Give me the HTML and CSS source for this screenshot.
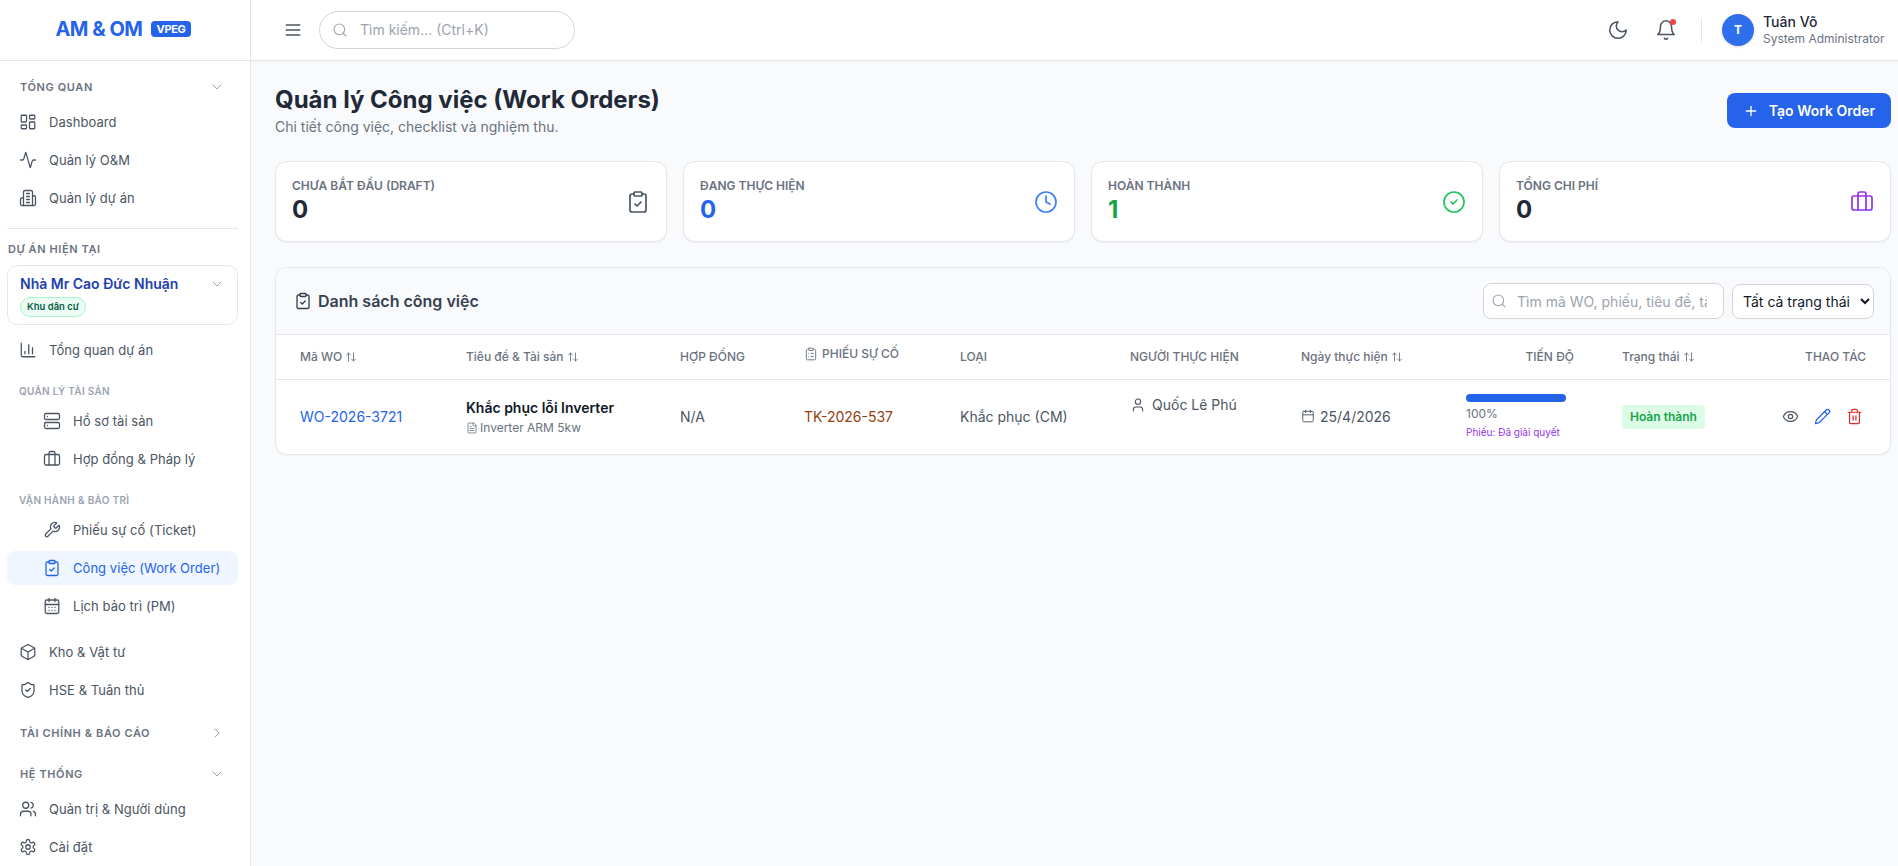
FILE: index.html
```html
<!DOCTYPE html>
<html lang="vi">
<head>
<meta charset="UTF-8">
<title>Quản lý Công việc (Work Orders)</title>
<link rel="stylesheet" href="styles.css">
</head>
<body>
<svg class="sprite" xmlns="http://www.w3.org/2000/svg">
    <symbol id="i-dashboard" viewBox="0 0 24 24"><rect x="3" y="3" width="7" height="9" rx="1"/><rect x="14" y="3" width="7" height="5" rx="1"/><rect x="14" y="12" width="7" height="9" rx="1"/><rect x="3" y="16" width="7" height="5" rx="1"/></symbol>
    <symbol id="i-activity" viewBox="0 0 24 24"><path d="M22 12h-2.48a2 2 0 0 0-1.93 1.46l-2.35 8.36a.25.25 0 0 1-.48 0L9.24 2.18a.25.25 0 0 0-.48 0l-2.35 8.36A2 2 0 0 1 4.49 12H2"/></symbol>
    <symbol id="i-building" viewBox="0 0 24 24"><path d="M6 22V4a2 2 0 0 1 2-2h8a2 2 0 0 1 2 2v18Z"/><path d="M6 12H4a2 2 0 0 0-2 2v6a2 2 0 0 0 2 2h2"/><path d="M18 9h2a2 2 0 0 1 2 2v9a2 2 0 0 1-2 2h-2"/><path d="M10 6h4M10 10h4M10 14h4M10 18h4"/></symbol>
    <symbol id="i-chart" viewBox="0 0 24 24"><path d="M3 3v16a2 2 0 0 0 2 2h16"/><path d="M18 17V9M13 17V5M8 17v-3"/></symbol>
    <symbol id="i-server" viewBox="0 0 24 24"><rect x="2" y="2" width="20" height="8" rx="2"/><rect x="2" y="14" width="20" height="8" rx="2"/><path d="M6 6h.01M6 18h.01"/></symbol>
    <symbol id="i-briefcase" viewBox="0 0 24 24"><path d="M16 20V4a2 2 0 0 0-2-2h-4a2 2 0 0 0-2 2v16"/><rect x="2" y="6" width="20" height="14" rx="2"/></symbol>
    <symbol id="i-wrench" viewBox="0 0 24 24"><path d="M14.7 6.3a1 1 0 0 0 0 1.4l1.6 1.6a1 1 0 0 0 1.4 0l3.77-3.77a6 6 0 0 1-7.94 7.94l-6.91 6.91a2.12 2.12 0 0 1-3-3l6.91-6.91a6 6 0 0 1 7.94-7.94l-3.76 3.76z"/></symbol>
    <symbol id="i-clipboard" viewBox="0 0 24 24"><rect x="8" y="2" width="8" height="4" rx="1"/><path d="M16 4h2a2 2 0 0 1 2 2v14a2 2 0 0 1-2 2H6a2 2 0 0 1-2-2V6a2 2 0 0 1 2-2h2"/><path d="m9 14 2 2 4-4"/></symbol>
    <symbol id="i-clipboard-list" viewBox="0 0 24 24"><rect x="8" y="2" width="8" height="4" rx="1"/><path d="M16 4h2a2 2 0 0 1 2 2v14a2 2 0 0 1-2 2H6a2 2 0 0 1-2-2V6a2 2 0 0 1 2-2h2"/><path d="M12 11h4M12 16h4M8 11h.01M8 16h.01"/></symbol>
    <symbol id="i-calendar-days" viewBox="0 0 24 24"><path d="M8 2v4M16 2v4"/><rect x="3" y="4" width="18" height="18" rx="2"/><path d="M3 10h18M8 14h.01M12 14h.01M16 14h.01M8 18h.01M12 18h.01M16 18h.01"/></symbol>
    <symbol id="i-calendar" viewBox="0 0 24 24"><path d="M8 2v4M16 2v4"/><rect x="3" y="4" width="18" height="18" rx="2"/><path d="M3 10h18"/></symbol>
    <symbol id="i-box" viewBox="0 0 24 24"><path d="M21 8a2 2 0 0 0-1-1.73l-7-4a2 2 0 0 0-2 0l-7 4A2 2 0 0 0 3 8v8a2 2 0 0 0 1 1.73l7 4a2 2 0 0 0 2 0l7-4A2 2 0 0 0 21 16Z"/><path d="m3.3 7 8.7 5 8.7-5M12 22V12"/></symbol>
    <symbol id="i-shield" viewBox="0 0 24 24"><path d="M20 13c0 5-3.5 7.5-7.66 8.95a1 1 0 0 1-.67-.01C7.5 20.5 4 18 4 13V6a1 1 0 0 1 1-1c2 0 4.5-1.2 6.24-2.72a1.17 1.17 0 0 1 1.52 0C14.51 3.81 17 5 19 5a1 1 0 0 1 1 1z"/><path d="m9 12 2 2 4-4"/></symbol>
    <symbol id="i-users" viewBox="0 0 24 24"><path d="M16 21v-2a4 4 0 0 0-4-4H6a4 4 0 0 0-4 4v2"/><circle cx="9" cy="7" r="4"/><path d="M22 21v-2a4 4 0 0 0-3-3.87M16 3.13a4 4 0 0 1 0 7.75"/></symbol>
    <symbol id="i-settings" viewBox="0 0 24 24"><path d="M12.22 2h-.44a2 2 0 0 0-2 2v.18a2 2 0 0 1-1 1.73l-.43.25a2 2 0 0 1-2 0l-.15-.08a2 2 0 0 0-2.73.73l-.22.38a2 2 0 0 0 .73 2.73l.15.1a2 2 0 0 1 1 1.72v.51a2 2 0 0 1-1 1.74l-.15.09a2 2 0 0 0-.73 2.73l.22.38a2 2 0 0 0 2.73.73l.15-.08a2 2 0 0 1 2 0l.43.25a2 2 0 0 1 1 1.73V20a2 2 0 0 0 2 2h.44a2 2 0 0 0 2-2v-.18a2 2 0 0 1 1-1.73l.43-.25a2 2 0 0 1 2 0l.15.08a2 2 0 0 0 2.73-.73l.22-.39a2 2 0 0 0-.73-2.73l-.15-.08a2 2 0 0 1-1-1.74v-.5a2 2 0 0 1 1-1.74l.15-.09a2 2 0 0 0 .73-2.73l-.22-.38a2 2 0 0 0-2.73-.73l-.15.08a2 2 0 0 1-2 0l-.43-.25a2 2 0 0 1-1-1.73V4a2 2 0 0 0-2-2z"/><circle cx="12" cy="12" r="3"/></symbol>
    <symbol id="i-chevron-down" viewBox="0 0 24 24"><path d="m6 9 6 6 6-6"/></symbol>
    <symbol id="i-chevron-right" viewBox="0 0 24 24"><path d="m9 18 6-6-6-6"/></symbol>
    <symbol id="i-menu" viewBox="0 0 24 24"><path d="M4 6h16M4 12h16M4 18h16"/></symbol>
    <symbol id="i-search" viewBox="0 0 24 24"><circle cx="11" cy="11" r="8"/><path d="m21 21-4.3-4.3"/></symbol>
    <symbol id="i-moon" viewBox="0 0 24 24"><path d="M12 3a6 6 0 0 0 9 9 9 9 0 1 1-9-9Z"/></symbol>
    <symbol id="i-bell" viewBox="0 0 24 24"><path d="M6 8a6 6 0 0 1 12 0c0 7 3 9 3 9H3s3-2 3-9"/><path d="M10.3 21a1.94 1.94 0 0 0 3.4 0"/></symbol>
    <symbol id="i-plus" viewBox="0 0 24 24"><path d="M5 12h14M12 5v14"/></symbol>
    <symbol id="i-clock" viewBox="0 0 24 24"><circle cx="12" cy="12" r="10"/><path d="M12 6v6l4 2"/></symbol>
    <symbol id="i-check-circle" viewBox="0 0 24 24"><circle cx="12" cy="12" r="10"/><path d="m9 12 2 2 4-4"/></symbol>
    <symbol id="i-sort" viewBox="0 0 24 24"><path d="m21 16-4 4-4-4M17 20V4M3 8l4-4 4 4M7 4v16"/></symbol>
    <symbol id="i-file" viewBox="0 0 24 24"><path d="M15 2H6a2 2 0 0 0-2 2v16a2 2 0 0 0 2 2h12a2 2 0 0 0 2-2V7Z"/><path d="M14 2v4a2 2 0 0 0 2 2h4M10 9H8M16 13H8M16 17H8"/></symbol>
    <symbol id="i-user" viewBox="0 0 24 24"><path d="M19 21v-2a4 4 0 0 0-4-4H9a4 4 0 0 0-4 4v2"/><circle cx="12" cy="7" r="4"/></symbol>
    <symbol id="i-eye" viewBox="0 0 24 24"><path d="M2.062 12.348a1 1 0 0 1 0-.696 10.75 10.75 0 0 1 19.876 0 1 1 0 0 1 0 .696 10.75 10.75 0 0 1-19.876 0"/><circle cx="12" cy="12" r="3"/></symbol>
    <symbol id="i-pencil" viewBox="0 0 24 24"><path d="M21.174 6.812a1 1 0 0 0-3.986-3.987L3.842 16.174a2 2 0 0 0-.5.83l-1.321 4.352a.5.5 0 0 0 .623.622l4.353-1.32a2 2 0 0 0 .83-.497z"/><path d="m15 5 4 4"/></symbol>
    <symbol id="i-trash" viewBox="0 0 24 24"><path d="M3 6h18M19 6v14c0 1-1 2-2 2H7c-1 0-2-1-2-2V6M8 6V4c0-1 1-2 2-2h4c1 0 2 1 2 2v2M10 11v6M14 11v6"/></symbol>
</svg>

<div class="app">
    <aside class="sidebar">
        <div class="logo">
            <span class="logo-text">AM &amp; OM</span>
            <span class="logo-badge">VPEG</span>
        </div>
        <nav class="nav">
            <div class="section"><span>TỔNG QUAN</span><svg class="chev"><use href="#i-chevron-down"/></svg></div>
            <a class="item"><svg class="icon"><use href="#i-dashboard"/></svg>Dashboard</a>
            <a class="item"><svg class="icon"><use href="#i-activity"/></svg>Quản lý O&amp;M</a>
            <a class="item"><svg class="icon"><use href="#i-building"/></svg>Quản lý dự án</a>

            <div class="divider"></div>
            <div class="current-label">DỰ ÁN HIỆN TẠI</div>
            <div class="project">
                <div class="project-top">
                    <span class="project-name">Nhà Mr Cao Đức Nhuận</span>
                    <svg class="chev"><use href="#i-chevron-down"/></svg>
                </div>
                <span class="project-tag">Khu dân cư</span>
            </div>

            <a class="item item-first"><svg class="icon"><use href="#i-chart"/></svg>Tổng quan dự án</a>
            <div class="group">QUẢN LÝ TÀI SẢN</div>
            <a class="item sub"><svg class="icon"><use href="#i-server"/></svg>Hồ sơ tài sản</a>
            <a class="item sub"><svg class="icon"><use href="#i-briefcase"/></svg>Hợp đồng &amp; Pháp lý</a>
            <div class="group">VẬN HÀNH &amp; BẢO TRÌ</div>
            <a class="item sub"><svg class="icon"><use href="#i-wrench"/></svg>Phiếu sự cố (Ticket)</a>
            <a class="item sub active"><svg class="icon"><use href="#i-clipboard"/></svg>Công việc (Work Order)</a>
            <a class="item sub"><svg class="icon"><use href="#i-calendar-days"/></svg>Lịch bảo trì (PM)</a>
            <a class="item item-first"><svg class="icon"><use href="#i-box"/></svg>Kho &amp; Vật tư</a>
            <a class="item"><svg class="icon"><use href="#i-shield"/></svg>HSE &amp; Tuân thủ</a>

            <div class="section section-finance"><span>TÀI CHÍNH &amp; BÁO CÁO</span><svg class="chev"><use href="#i-chevron-right"/></svg></div>
            <div class="section section-system"><span>HỆ THỐNG</span><svg class="chev"><use href="#i-chevron-down"/></svg></div>
            <a class="item"><svg class="icon"><use href="#i-users"/></svg>Quản trị &amp; Người dùng</a>
            <a class="item"><svg class="icon"><use href="#i-settings"/></svg>Cài đặt</a>
        </nav>
    </aside>

    <div class="content">
        <header class="topbar">
            <svg class="menu-icon"><use href="#i-menu"/></svg>
            <label class="top-search">
                <svg class="top-search-icon"><use href="#i-search"/></svg>
                <input type="text" placeholder="Tìm kiếm... (Ctrl+K)">
            </label>
            <div class="top-right">
                <svg class="top-icon"><use href="#i-moon"/></svg>
                <div class="bell">
                    <svg class="top-icon"><use href="#i-bell"/></svg>
                    <span class="bell-dot"></span>
                </div>
                <div class="top-sep"></div>
                <div class="avatar">T</div>
                <div class="user">
                    <div class="user-name">Tuân Võ</div>
                    <div class="user-role">System Administrator</div>
                </div>
            </div>
        </header>

        <main class="page">
            <div class="page-head">
                <div>
                    <h1>Quản lý Công việc (Work Orders)</h1>
                    <p>Chi tiết công việc, checklist và nghiệm thu.</p>
                </div>
                <button class="btn-primary"><svg><use href="#i-plus"/></svg>Tạo Work Order</button>
            </div>

            <div class="stats">
                <div class="stat">
                    <div>
                        <div class="stat-label">CHƯA BẮT ĐẦU (DRAFT)</div>
                        <div class="stat-value">0</div>
                    </div>
                    <svg class="stat-icon c-slate"><use href="#i-clipboard"/></svg>
                </div>
                <div class="stat">
                    <div>
                        <div class="stat-label">ĐANG THỰC HIỆN</div>
                        <div class="stat-value c-blue">0</div>
                    </div>
                    <svg class="stat-icon c-blue-light"><use href="#i-clock"/></svg>
                </div>
                <div class="stat">
                    <div>
                        <div class="stat-label">HOÀN THÀNH</div>
                        <div class="stat-value c-green">1</div>
                    </div>
                    <svg class="stat-icon c-green-light"><use href="#i-check-circle"/></svg>
                </div>
                <div class="stat">
                    <div>
                        <div class="stat-label">TỔNG CHI PHÍ</div>
                        <div class="stat-value">0</div>
                    </div>
                    <svg class="stat-icon c-purple"><use href="#i-briefcase"/></svg>
                </div>
            </div>

            <section class="panel">
                <div class="panel-head">
                    <h2><svg><use href="#i-clipboard"/></svg>Danh sách công việc</h2>
                    <div class="panel-tools">
                        <label class="panel-search">
                            <svg><use href="#i-search"/></svg>
                            <input type="text" placeholder="Tìm mã WO, phiếu, tiêu đề, tài sản...">
                        </label>
                        <select class="panel-select">
                            <option>Tất cả trạng thái</option>
                        </select>
                    </div>
                </div>
                <table class="wo-table">
                    <colgroup>
                        <col class="w-code"><col class="w-title"><col class="w-contract"><col class="w-ticket"><col class="w-type"><col class="w-person"><col class="w-date"><col class="w-progress"><col class="w-status"><col class="w-actions">
                    </colgroup>
                    <thead>
                        <tr>
                            <th>Mã WO <svg class="sort"><use href="#i-sort"/></svg></th>
                            <th>Tiêu đề &amp; Tài sản <svg class="sort"><use href="#i-sort"/></svg></th>
                            <th>HỢP ĐỒNG</th>
                            <th class="th-ticket"><span class="th-ticket-in"><svg><use href="#i-clipboard-list"/></svg>PHIẾU SỰ CỐ</span></th>
                            <th>LOẠI</th>
                            <th>NGƯỜI THỰC HIỆN</th>
                            <th>Ngày thực hiện <svg class="sort"><use href="#i-sort"/></svg></th>
                            <th class="right">TIẾN ĐỘ</th>
                            <th>Trạng thái <svg class="sort"><use href="#i-sort"/></svg></th>
                            <th class="right">THAO TÁC</th>
                        </tr>
                    </thead>
                    <tbody>
                        <tr>
                            <td><a class="wo-code">WO-2026-3721</a></td>
                            <td>
                                <div class="wo-title">Khắc phục lỗi Inverter</div>
                                <div class="wo-asset"><svg><use href="#i-file"/></svg>Inverter ARM 5kw</div>
                            </td>
                            <td>N/A</td>
                            <td><a class="wo-ticket">TK-2026-537</a></td>
                            <td>Khắc phục (CM)</td>
                            <td class="td-person"><span class="with-icon"><svg><use href="#i-user"/></svg>Quốc Lê Phú</span></td>
                            <td><span class="with-icon with-date"><svg><use href="#i-calendar"/></svg>25/4/2026</span></td>
                            <td>
                                <div class="bar"><div class="bar-fill" style="width: 100%"></div></div>
                                <div class="bar-pct">100%</div>
                                <div class="bar-note">Phiếu: Đã giải quyết</div>
                            </td>
                            <td><span class="status">Hoàn thành</span></td>
                            <td>
                                <div class="actions">
                                    <svg class="c-gray"><use href="#i-eye"/></svg>
                                    <svg class="c-blue"><use href="#i-pencil"/></svg>
                                    <svg class="c-red"><use href="#i-trash"/></svg>
                                </div>
                            </td>
                        </tr>
                    </tbody>
                </table>
            </section>
        </main>
    </div>
</div>
</body>
</html>
```

FILE: styles.css
```css
* {
    box-sizing: border-box;
}
body {
    margin: 0;
    font-family: Inter, "Noto Sans", sans-serif;
    font-size: 14px;
    color: #111827;
    background: #f8fafc;
}
svg {
    fill: none;
    stroke: currentColor;
    stroke-width: 2;
    stroke-linecap: round;
    stroke-linejoin: round;
    flex-shrink: 0;
}
.sprite {
    display: none;
}
.app {
    display: flex;
    height: 100vh;
    overflow: hidden;
}

/* sidebar */
.sidebar {
    width: 251px;
    flex-shrink: 0;
    background: #fff;
    border-right: 1px solid #e5e7eb;
}
.logo {
    height: 61px;
    border-bottom: 1px solid #e5e7eb;
    display: flex;
    align-items: center;
    justify-content: center;
    gap: 9px;
    padding: 0 4px 2px 0;
}
.logo-text {
    font-size: 20px;
    font-weight: 700;
    letter-spacing: -0.5px;
    color: #2563eb;
}
.logo-badge {
    background: #2563eb;
    color: #fff;
    font-size: 11px;
    font-weight: 700;
    letter-spacing: -0.3px;
    border-radius: 4px;
    padding: 1px 5px;
    line-height: 14px;
}
.nav {
    display: flex;
    flex-direction: column;
    padding: 13px 12px 0 7px;
}
.section {
    flex-shrink: 0;
    height: 26px;
    padding: 0 13px;
    display: flex;
    align-items: center;
    justify-content: space-between;
    font-size: 11px;
    font-weight: 600;
    letter-spacing: 0.6px;
    color: #6b7280;
    margin-bottom: 5px;
}
.chev {
    width: 16px;
    height: 16px;
    color: #9ca3af;
    stroke-width: 1.5;
}
.item {
    flex-shrink: 0;
    height: 34px;
    display: flex;
    align-items: center;
    gap: 12px;
    padding-left: 12px;
    margin-bottom: 4px;
    font-size: 13px;
    letter-spacing: 0.05px;
    color: #4b5563;
    border-radius: 8px;
}
.item .icon {
    width: 18px;
    height: 18px;
    stroke-width: 1.7;
}
.item.sub {
    padding-left: 36px;
}
.item.active {
    background: #eff6ff;
    color: #2563eb;
}
.item-first {
    margin-top: 8px;
}
.divider {
    flex-shrink: 0;
    height: 1px;
    background: #e5e7eb;
    margin-top: 9px;
}
.current-label {
    margin-top: 12px;
    height: 16px;
    line-height: 16px;
    font-size: 11px;
    font-weight: 600;
    letter-spacing: 0.6px;
    color: #6b7280;
    margin-left: 1px;
}
.project {
    flex-shrink: 0;
    margin-top: 8px;
    height: 60px;
    border: 1px solid #e5e7eb;
    border-radius: 10px;
    padding: 8px 12px;
}
.project-top {
    display: flex;
    align-items: center;
    justify-content: space-between;
}
.project-name {
    font-size: 14px;
    font-weight: 600;
    color: #1e40af;
    line-height: 20px;
}
.project-tag {
    display: block;
    width: fit-content;
    background: #ecfdf5;
    border: 1px solid #a7f3d0;
    color: #065f46;
    font-size: 9.5px;
    font-weight: 600;
    line-height: 18px;
    border-radius: 10px;
    padding: 0 6px;
    margin-top: 3px;
}
.group {
    flex-shrink: 0;
    margin-top: 12px;
    margin-bottom: 5px;
    height: 16px;
    line-height: 16px;
    padding-left: 12px;
    font-size: 10px;
    font-weight: 600;
    letter-spacing: 0.3px;
    color: #9ca3af;
}
.section-finance {
    margin-top: 9px;
    margin-bottom: 0;
}
.section-system {
    margin-top: 15px;
}

/* top bar */
.content {
    flex: 1;
    min-width: 0;
}
.topbar {
    height: 61px;
    background: #fff;
    border-bottom: 1px solid #e5e7eb;
    box-shadow: 0 1px 2px rgba(0, 0, 0, 0.04);
    display: flex;
    align-items: center;
    padding: 0 7px 1px 32px;
}
.menu-icon {
    width: 20px;
    height: 20px;
    color: #4b5563;
}
.top-search {
    margin-left: 16px;
    width: 256px;
    height: 38px;
    border: 1px solid #d1d5db;
    border-radius: 19px;
    display: flex;
    align-items: center;
    padding-left: 12px;
    gap: 12px;
}
.top-search-icon {
    width: 16px;
    height: 16px;
    color: #9ca3af;
    stroke-width: 1.6;
}
.top-search input, .panel-search input {
    border: 0;
    outline: 0;
    background: transparent;
    font-family: inherit;
    font-size: 14px;
    min-width: 0;
    flex: 1;
    color: #111827;
    padding: 0;
}
.top-search input::placeholder, .panel-search input::placeholder {
    color: #9ca3af;
    opacity: 1;
}
.top-right {
    margin-left: auto;
    display: flex;
    align-items: center;
}
.top-icon {
    width: 22px;
    height: 22px;
    color: #4b5563;
    stroke-width: 1.7;
}
.bell {
    position: relative;
    margin-left: 26px;
    height: 22px;
}
.bell-dot {
    position: absolute;
    top: 0;
    right: 1px;
    width: 6px;
    height: 6px;
    border-radius: 50%;
    background: #ef4444;
}
.top-sep {
    width: 1px;
    height: 24px;
    background: #e5e7eb;
    margin: 0 20px 0 24px;
}
.avatar {
    width: 32px;
    height: 32px;
    border-radius: 50%;
    background: #2f6fec;
    color: #fff;
    font-size: 12px;
    font-weight: 700;
    display: flex;
    align-items: center;
    justify-content: center;
    box-shadow: 0 1px 3px rgba(0, 0, 0, 0.15);
}
.user {
    margin-left: 9px;
    width: 128px;
}
.user-name {
    font-size: 14px;
    font-weight: 500;
    line-height: 18px;
    color: #1f2937;
}
.user-role {
    font-size: 12px;
    line-height: 16px;
    color: #6b7280;
}

/* page */
.page {
    padding: 23px 7px 0 24px;
}
.page-head {
    display: flex;
    align-items: center;
    justify-content: space-between;
}
h1 {
    margin: 0;
    font-size: 24px;
    line-height: 32px;
    font-weight: 700;
    color: #1f2937;
}
.page-head p {
    margin: 1px 0 0;
    font-size: 14px;
    line-height: 20px;
    color: #6b7280;
}
.btn-primary {
    height: 35px;
    width: 164px;
    border: 0;
    border-radius: 8px;
    background: #2563eb;
    color: #fff;
    font-family: inherit;
    font-size: 14px;
    font-weight: 600;
    display: flex;
    align-items: center;
    justify-content: center;
    gap: 10px;
}
.btn-primary svg {
    width: 16px;
    height: 16px;
}
.stats {
    margin-top: 24px;
    display: grid;
    grid-template-columns: repeat(4, 1fr);
    gap: 16px;
}
.stat {
    height: 81px;
    background: #fff;
    border: 1px solid #e5e7eb;
    border-radius: 12px;
    box-shadow: 0 1px 2px rgba(0, 0, 0, 0.05);
    padding: 15px 16px;
    display: flex;
    align-items: center;
    justify-content: space-between;
}
.stat-label {
    font-size: 12px;
    line-height: 16px;
    font-weight: 600;
    color: #6b7280;
}
.stat-value {
    font-size: 24px;
    line-height: 32px;
    font-weight: 700;
    color: #1f2937;
}
.stat-icon {
    width: 24px;
    height: 24px;
    stroke-width: 1.7;
}
.c-slate { color: #4b5563; }
.c-blue { color: #2563eb; }
.c-blue-light { color: #3b82f6; }
.c-green { color: #16a34a; }
.c-green-light { color: #22c55e; }
.c-purple { color: #9333ea; }
.c-gray { color: #4b5563; }
.c-red { color: #dc2626; }

/* table panel */
.panel {
    margin-top: 25px;
    background: #fff;
    border: 1px solid #e5e7eb;
    border-radius: 12px;
    box-shadow: 0 1px 2px rgba(0, 0, 0, 0.05);
    overflow: hidden;
}
.panel-head {
    height: 67px;
    background: #f9fafb;
    border-bottom: 1px solid #e5e7eb;
    display: flex;
    align-items: center;
    justify-content: space-between;
    padding: 0 16px 0 18px;
}
.panel-head h2 {
    margin: 0;
    font-size: 16px;
    font-weight: 600;
    color: #374151;
    display: flex;
    align-items: center;
    gap: 6px;
}
.panel-head h2 svg {
    width: 18px;
    height: 18px;
    color: #374151;
    stroke-width: 1.8;
}
.panel-tools {
    display: flex;
    align-items: center;
    gap: 8px;
}
.panel-search {
    width: 241px;
    height: 36px;
    background: #fff;
    border: 1px solid #d1d5db;
    border-radius: 8px;
    display: flex;
    align-items: center;
    gap: 10px;
    padding: 0 16px 0 7px;
}
.panel-search svg {
    width: 16px;
    height: 16px;
    color: #9ca3af;
    stroke-width: 1.6;
}
.panel-select {
    width: 142px;
    height: 35px;
    background: #fff;
    border: 1px solid #d1d5db;
    border-radius: 8px;
    font-family: inherit;
    font-size: 14px;
    color: #111827;
    padding: 0 6px;
}
.wo-table {
    width: 100%;
    border-collapse: collapse;
    table-layout: fixed;
}
.w-code { width: 166px; }
.w-title { width: 214px; }
.w-contract { width: 124px; }
.w-ticket { width: 156px; }
.w-type { width: 170px; }
.w-person { width: 171px; }
.w-date { width: 165px; }
.w-progress { width: 156px; }
.w-status { width: 132px; }
.wo-table th {
    height: 44px;
    padding: 0 24px;
    text-align: left;
    font-size: 12px;
    font-weight: 500;
    color: #6b7280;
    border-bottom: 1px solid #e5e7eb;
    white-space: nowrap;
}
.wo-table th.right {
    text-align: right;
}
.sort {
    width: 12px;
    height: 12px;
    vertical-align: -2px;
    stroke-width: 1.8;
    color: #6b7280;
}
.th-ticket-in {
    display: inline-flex;
    align-items: center;
    gap: 4px;
    position: relative;
    top: -2px;
}
.th-ticket-in svg {
    width: 14px;
    height: 14px;
    stroke-width: 1.6;
}
.wo-table td {
    height: 75px;
    padding: 0 24px;
    color: #4b5563;
    white-space: nowrap;
}
.wo-code {
    color: #2563eb;
}
.wo-title {
    font-weight: 600;
    color: #111827;
    line-height: 20px;
}
.wo-asset {
    display: flex;
    align-items: center;
    gap: 2px;
    font-size: 12px;
    line-height: 16px;
    color: #6b7280;
    margin-top: 2px;
}
.wo-asset svg {
    width: 12px;
    height: 12px;
    stroke-width: 1.6;
}
.wo-ticket {
    color: #92400e;
}
.with-icon {
    display: inline-flex;
    align-items: center;
    gap: 6px;
}
.with-icon svg {
    width: 16px;
    height: 16px;
    stroke-width: 1.6;
}
.with-date {
    gap: 5px;
}
.with-date svg {
    width: 14px;
    height: 14px;
}
.td-person {
    padding-bottom: 22px !important;
}
.bar {
    height: 8px;
    width: 100px;
    border-radius: 4px;
    background: #e5e7eb;
    overflow: hidden;
}
.bar-fill {
    height: 100%;
    background: #2563eb;
}
.bar-pct {
    font-size: 12px;
    line-height: 16px;
    color: #6b7280;
    margin-top: 4px;
}
.bar-note {
    font-size: 10px;
    line-height: 14px;
    color: #9333ea;
    margin-top: 3px;
}
.status {
    display: inline-block;
    background: #dcfce7;
    color: #16a34a;
    font-size: 12px;
    font-weight: 600;
    line-height: 24px;
    padding: 0 8px;
    border-radius: 4px;
}
.actions {
    display: flex;
    justify-content: flex-end;
    gap: 15px;
    margin-right: 3px;
}
.actions svg {
    width: 17px;
    height: 17px;
    stroke-width: 1.7;
}
```
